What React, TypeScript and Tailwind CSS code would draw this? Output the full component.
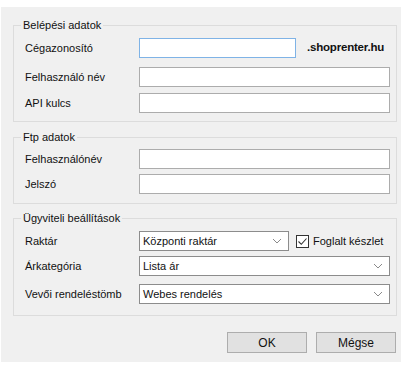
import React from "react";

const font = { fontFamily: '"Liberation Sans", Arial, sans-serif' };

function Group({ title, className, children }: { title: string; className?: string; children: React.ReactNode }) {
  return (
    <div className={`relative ml-[12px] w-[384px] border border-[#dcdcdc] ${className ?? ""}`}>
      <span className="absolute -top-[8px] left-[7px] bg-[#f0f0f0] px-[2px] text-[11px] leading-[14px] text-[#111]">
        {title}
      </span>
      {children}
    </div>
  );
}

function Row({ label, className, children }: { label: string; className?: string; children: React.ReactNode }) {
  return (
    <div className={`flex items-center h-[20px] ${className ?? ""}`}>
      <span className="w-[125px] pl-[11px] text-[11px] text-[#111]">{label}</span>
      {children}
    </div>
  );
}

function Input({ w = "w-[251px]", focus }: { w?: string; focus?: boolean }) {
  return (
    <div className={`${w} h-[20px] bg-white border ${focus ? "border-[#7fb3e6]" : "border-[#acacac]"}`} />
  );
}

function Chevron() {
  return (
    <svg width="10" height="6" viewBox="0 0 10 6" className="mr-[6px]">
      <path d="M1 1 L5 5 L9 1" fill="none" stroke="#8a8a8a" strokeWidth="1" />
    </svg>
  );
}

function Select({ value, w = "w-[251px]" }: { value: string; w?: string }) {
  return (
    <div className={`${w} h-[20px] bg-white border border-[#8c8c8c] flex items-center justify-between`}>
      <span className="pl-[3px] text-[11px] text-[#111]">{value}</span>
      <Chevron />
    </div>
  );
}

export default function App() {
  return (
    <div className="w-[408px] h-[368px] bg-white pt-[7px] pl-[1px]" style={font}>
      <div className="w-[400px] h-[355px] bg-[#f0f0f0] pt-[18px]">
        <Group title="Belépési adatok" className="pt-[12px] pb-[8px]">
          <Row label="Cégazonosító">
            <Input w="w-[157px]" focus />
            <span className="ml-[11px] text-[11.5px] font-bold text-[#111] tracking-[-0.2px]">.shoprenter.hu</span>
          </Row>
          <Row label="Felhasználó név" className="mt-[9px]">
            <Input />
          </Row>
          <Row label="API kulcs" className="mt-[6px]">
            <Input />
          </Row>
        </Group>

        <Group title="Ftp adatok" className="mt-[15px] pt-[11px] pb-[9px]">
          <Row label="Felhasználónév">
            <Input />
          </Row>
          <Row label="Jelszó" className="mt-[5px]">
            <Input />
          </Row>
        </Group>

        <Group title="Ügyviteli beállítások" className="mt-[14px] pt-[12px] pb-[11px]">
          <Row label="Raktár">
            <Select value="Központi raktár" w="w-[150px]" />
            <div className="ml-[7px] flex items-center">
              <div className="w-[13px] h-[13px] border border-[#333] bg-white flex items-center justify-center">
                <svg width="11" height="11" viewBox="0 0 11 11">
                  <path d="M1.5 5.5 L4.3 8.3 L9.5 2.5" fill="none" stroke="#333" strokeWidth="1.1" />
                </svg>
              </div>
              <span className="ml-[4px] text-[11px] text-[#111]">Foglalt készlet</span>
            </div>
          </Row>
          <Row label="Árkategória" className="mt-[5px]">
            <Select value="Lista ár" />
          </Row>
          <Row label="Vevői rendeléstömb" className="mt-[8px]">
            <Select value="Webes rendelés" />
          </Row>
        </Group>

        <div className="flex justify-end gap-[9px] mt-[16px] pr-[5px]">
          <button className="w-[80px] h-[21px] bg-[#e1e1e1] border border-[#adadad] text-[12px] text-[#111]">OK</button>
          <button className="w-[80px] h-[21px] bg-[#e1e1e1] border border-[#adadad] text-[12px] text-[#111]">Mégse</button>
        </div>
      </div>
    </div>
  );
}
